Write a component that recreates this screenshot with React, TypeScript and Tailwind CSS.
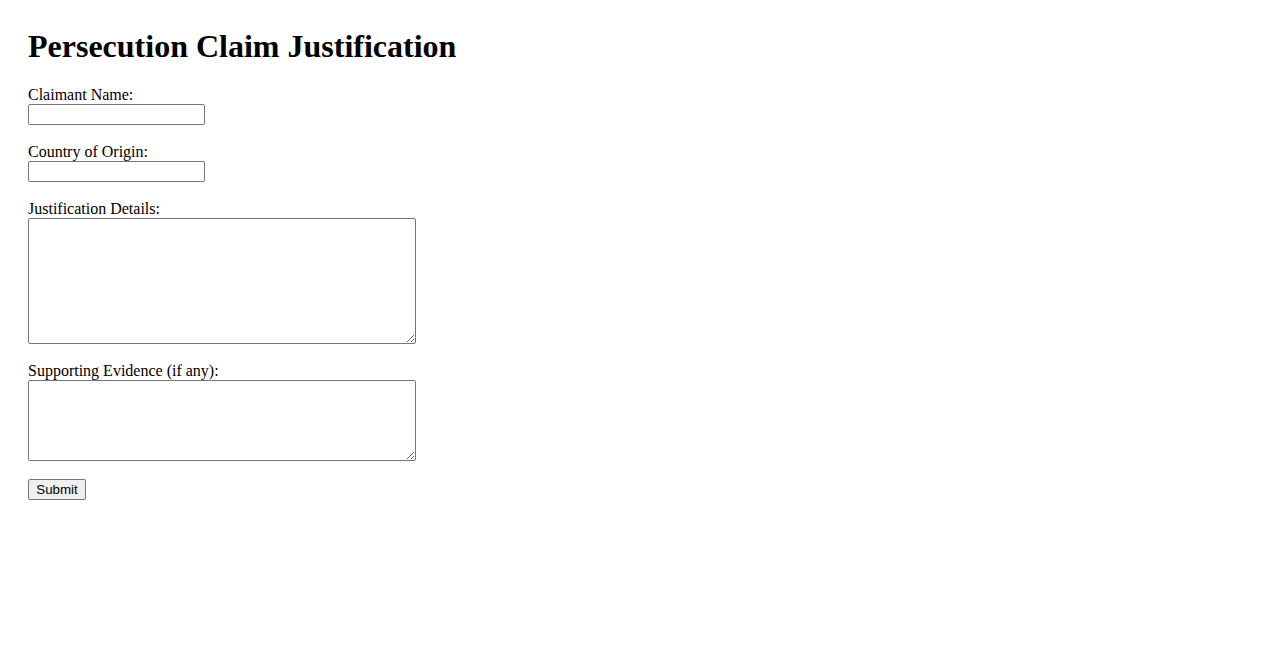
import React from 'react';

const fieldClass =
  'block w-[177px] h-[21px] border border-[#767676] rounded-[2px] bg-white px-[2px] py-[1px] text-[13.33px] font-["Liberation_Sans",Arial,sans-serif]';

const areaClass =
  'block w-[388px] border border-[#767676] rounded-[2px] bg-white px-[2px] py-[2px] text-[13.33px] font-["Liberation_Mono",monospace] resize';

const App: React.FC = () => {
  return (
    <div className="min-h-screen bg-white text-black font-['Liberation_Serif','Times_New_Roman',serif] pl-[28px] pt-[28px]">
      <h1 className="text-[32px] leading-[37px] font-bold mb-[21px]">Persecution Claim Justification</h1>
      <form onSubmit={(e) => e.preventDefault()}>
        <div className="mb-[18px]">
          <label htmlFor="name" className="block text-[16px] leading-[18px]">Claimant Name:</label>
          <input id="name" type="text" className={fieldClass} />
        </div>
        <div className="mb-[18px]">
          <label htmlFor="country" className="block text-[16px] leading-[18px]">Country of Origin:</label>
          <input id="country" type="text" className={fieldClass} />
        </div>
        <div className="mb-[18px]">
          <label htmlFor="details" className="block text-[16px] leading-[18px]">Justification Details:</label>
          <textarea id="details" className={`${areaClass} h-[126px]`} />
        </div>
        <div className="mb-[18px]">
          <label htmlFor="evidence" className="block text-[16px] leading-[18px]">Supporting Evidence (if any):</label>
          <textarea id="evidence" className={`${areaClass} h-[81px]`} />
        </div>
        <button
          type="submit"
          className="block w-[58px] h-[21px] border border-[#767676] rounded-[2px] bg-[#efefef] text-[13.33px] leading-[17px] text-black font-['Liberation_Sans',Arial,sans-serif]"
        >
          Submit
        </button>
      </form>
    </div>
  );
};

export default App;
